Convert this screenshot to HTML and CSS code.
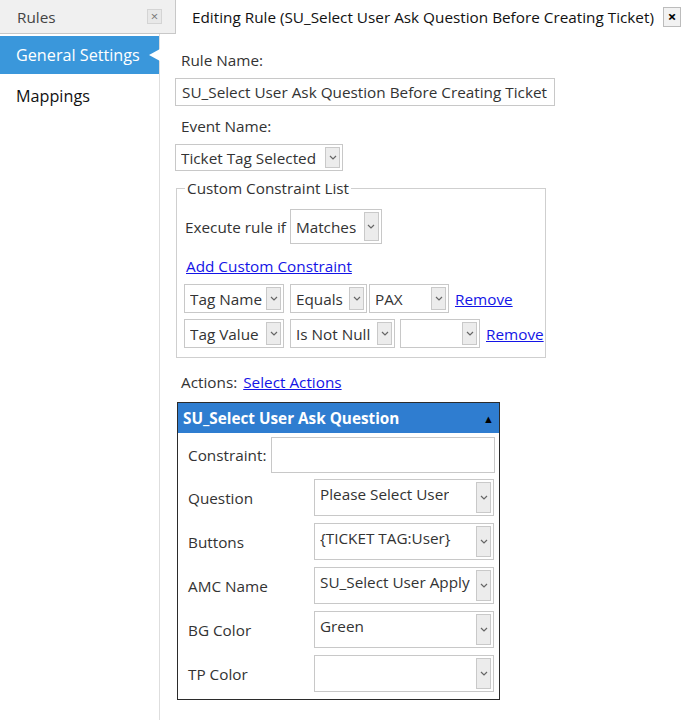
FILE: index.html
```html
<!DOCTYPE html>
<html lang="en">
<head>
    <meta charset="UTF-8">
    <title>Editing Rule</title>
    <link rel="stylesheet" href="styles.css">
</head>
<body>

<!-- Tab strip -->
<div class="tabbar">
    <div class="rules-tab">
        <span>Rules</span>
        <span class="tab-close">&times;</span>
    </div>
    <div class="edit-tab">
        <span>Editing Rule (SU_Select User Ask Question Before Creating Ticket)</span>
        <span class="edit-close">&times;</span>
    </div>
</div>

<div class="layout">
    <!-- Left navigation -->
    <nav class="sidebar">
        <div class="nav-item active">General Settings</div>
        <div class="nav-item">Mappings</div>
    </nav>

    <!-- Rule form -->
    <main class="content">
        <div class="label first">Rule Name:</div>
        <div class="textbox rule-name">SU_Select User Ask Question Before Creating Ticket</div>

        <div class="label">Event Name:</div>
        <div class="select event-select">
            <span class="select-text">Ticket Tag Selected</span>
            <span class="select-btn"><svg width="8" height="5" viewBox="0 0 8 5"><path d="M1 1l3 3 3-3" fill="none" stroke="#666" stroke-width="1.2"/></svg></span>
        </div>

        <fieldset class="constraints">
            <legend>Custom Constraint List</legend>

            <div class="execute-row">
                <span>Execute rule if</span>
                <div class="select matches-select">
                    <span class="select-text">Matches</span>
                    <span class="select-btn"><svg width="8" height="5" viewBox="0 0 8 5"><path d="M1 1l3 3 3-3" fill="none" stroke="#666" stroke-width="1.2"/></svg></span>
                </div>
            </div>

            <a href="#" class="link add-link">Add Custom Constraint</a>

            <div class="constraint-row">
                <div class="select small w-name">
                    <span class="select-text">Tag Name</span>
                    <span class="select-btn"><svg width="8" height="5" viewBox="0 0 8 5"><path d="M1 1l3 3 3-3" fill="none" stroke="#666" stroke-width="1.2"/></svg></span>
                </div>
                <div class="select small w-equals">
                    <span class="select-text">Equals</span>
                    <span class="select-btn"><svg width="8" height="5" viewBox="0 0 8 5"><path d="M1 1l3 3 3-3" fill="none" stroke="#666" stroke-width="1.2"/></svg></span>
                </div>
                <div class="select small w-value">
                    <span class="select-text">PAX</span>
                    <span class="select-btn"><svg width="8" height="5" viewBox="0 0 8 5"><path d="M1 1l3 3 3-3" fill="none" stroke="#666" stroke-width="1.2"/></svg></span>
                </div>
                <a href="#" class="link">Remove</a>
            </div>

            <div class="constraint-row">
                <div class="select small w-name">
                    <span class="select-text">Tag Value</span>
                    <span class="select-btn"><svg width="8" height="5" viewBox="0 0 8 5"><path d="M1 1l3 3 3-3" fill="none" stroke="#666" stroke-width="1.2"/></svg></span>
                </div>
                <div class="select small w-notnull">
                    <span class="select-text">Is Not Null</span>
                    <span class="select-btn"><svg width="8" height="5" viewBox="0 0 8 5"><path d="M1 1l3 3 3-3" fill="none" stroke="#666" stroke-width="1.2"/></svg></span>
                </div>
                <div class="select small w-value">
                    <span class="select-text"></span>
                    <span class="select-btn"><svg width="8" height="5" viewBox="0 0 8 5"><path d="M1 1l3 3 3-3" fill="none" stroke="#666" stroke-width="1.2"/></svg></span>
                </div>
                <a href="#" class="link">Remove</a>
            </div>
        </fieldset>

        <div class="actions-row">
            <span>Actions:</span>
            <a href="#" class="link">Select Actions</a>
        </div>

        <!-- Action panel -->
        <div class="action-panel">
            <div class="panel-header">
                <span>SU_Select User Ask Question</span>
                <span class="collapse">&#9650;</span>
            </div>
            <div class="panel-body">
                <div class="constraint-line">
                    <span>Constraint:</span>
                    <div class="textbox constraint-input"></div>
                </div>

                <div class="param-grid">
                    <span class="param-label">Question</span>
                    <div class="select param">
                        <span class="select-text">Please Select User</span>
                        <span class="select-btn"><svg width="8" height="5" viewBox="0 0 8 5"><path d="M1 1l3 3 3-3" fill="none" stroke="#666" stroke-width="1.2"/></svg></span>
                    </div>

                    <span class="param-label">Buttons</span>
                    <div class="select param">
                        <span class="select-text">{TICKET TAG:User}</span>
                        <span class="select-btn"><svg width="8" height="5" viewBox="0 0 8 5"><path d="M1 1l3 3 3-3" fill="none" stroke="#666" stroke-width="1.2"/></svg></span>
                    </div>

                    <span class="param-label">AMC Name</span>
                    <div class="select param">
                        <span class="select-text">SU_Select User Apply</span>
                        <span class="select-btn"><svg width="8" height="5" viewBox="0 0 8 5"><path d="M1 1l3 3 3-3" fill="none" stroke="#666" stroke-width="1.2"/></svg></span>
                    </div>

                    <span class="param-label">BG Color</span>
                    <div class="select param">
                        <span class="select-text">Green</span>
                        <span class="select-btn"><svg width="8" height="5" viewBox="0 0 8 5"><path d="M1 1l3 3 3-3" fill="none" stroke="#666" stroke-width="1.2"/></svg></span>
                    </div>

                    <span class="param-label">TP Color</span>
                    <div class="select param">
                        <span class="select-text"></span>
                        <span class="select-btn"><svg width="8" height="5" viewBox="0 0 8 5"><path d="M1 1l3 3 3-3" fill="none" stroke="#666" stroke-width="1.2"/></svg></span>
                    </div>
                </div>
            </div>
        </div>
    </main>
</div>

</body>
</html>
```

FILE: styles.css
```css
/* General page */
body {
    margin: 0;
    width: 690px;
    height: 720px;
    overflow: hidden;
    background: #fff;
    font-family: 'Open Sans', 'Noto Sans', sans-serif;
    font-size: 15.3px;
    color: #333;
}

/* Tab strip */
.tabbar {
    display: flex;
    height: 34px;
}

.rules-tab {
    width: 176px;
    box-sizing: border-box;
    background: #f0f0f0;
    border-right: 1px solid #c8c8c8;
    border-bottom: 1px solid #c8c8c8;
    display: flex;
    align-items: center;
    justify-content: space-between;
    padding: 0 13px 0 17px;
    color: #444;
}

.tab-close {
    width: 15px;
    height: 15px;
    box-sizing: border-box;
    border: 1px solid #d4d4d4;
    background: #e8e8e8;
    color: #777;
    font-size: 13px;
    line-height: 12px;
    text-align: center;
}

.edit-tab {
    flex: 1;
    display: flex;
    align-items: center;
    justify-content: space-between;
    padding: 0 9px 0 16px;
    color: #111;
}

.edit-close {
    width: 18px;
    height: 20px;
    box-sizing: border-box;
    border: 1px solid #bcbcbc;
    background: #f2f2f2;
    color: #000;
    font-weight: bold;
    font-size: 15px;
    line-height: 17px;
    text-align: center;
}

/* Main layout */
.layout {
    display: flex;
    height: 686px;
}

.sidebar {
    width: 160px;
    box-sizing: border-box;
    border-right: 1px solid #dedede;
    padding-top: 2px;
}

.nav-item {
    position: relative;
    height: 38px;
    line-height: 38px;
    padding-left: 16px;
    font-size: 16.2px;
    color: #111;
}

.nav-item.active {
    background: #3a97db;
    color: #fff;
}

/* Little notch pointing at the content */
.nav-item.active::after {
    content: '';
    position: absolute;
    right: -1px;
    top: 13px;
    border-top: 6px solid transparent;
    border-bottom: 6px solid transparent;
    border-right: 11px solid #fff;
}

.nav-item + .nav-item {
    height: 44px;
    line-height: 44px;
}

.content {
    flex: 1;
    padding-left: 15px;
}

.label {
    line-height: 22px;
    margin: 9px 0 7px 6px;
}

.label.first {
    margin-top: 15px;
}

.textbox {
    box-sizing: border-box;
    border: 1px solid #c8c8c8;
    background: #fff;
}

.rule-name {
    width: 380px;
    height: 28px;
    line-height: 26px;
    padding-left: 6px;
    white-space: nowrap;
    overflow: hidden;
}

/* Fake dropdowns */
.select {
    box-sizing: border-box;
    border: 1px solid #c8c8c8;
    background: #fff;
    display: flex;
    align-items: center;
    justify-content: space-between;
    padding: 2px 2px 2px 5px;
}

.select-text {
    white-space: nowrap;
    overflow: hidden;
}

.select-btn {
    align-self: stretch;
    width: 15px;
    box-sizing: border-box;
    border: 1px solid #c9c9c9;
    background: #ececec;
    display: flex;
    align-items: center;
    justify-content: center;
    flex-shrink: 0;
}

.event-select {
    width: 168px;
    height: 27px;
}

/* Custom constraint list */
.constraints {
    width: 370px;
    min-width: 0;
    box-sizing: border-box;
    margin: 6px 0 0 1px;
    padding: 0 0 9px 7px;
    border: 1px solid #cfcfcf;
}

.constraints legend {
    padding: 0 2px;
    margin-left: 1px;
    line-height: 22px;
}

.execute-row {
    display: flex;
    align-items: center;
    gap: 4px;
    margin-top: 10px;
    padding-left: 1px;
}

.matches-select {
    width: 92px;
    height: 35px;
}

.link {
    color: #1414e6;
    text-decoration: underline;
}

.add-link {
    display: block;
    line-height: 22px;
    margin: 11px 0 7px 2px;
}

.constraint-row {
    display: flex;
    align-items: center;
    margin-bottom: 6px;
    white-space: nowrap;
}

.constraint-row:last-child {
    margin-bottom: 0;
}

.constraint-row > * {
    flex-shrink: 0;
}

.select.small {
    height: 29px;
    margin-right: 5px;
}

.w-name { width: 100px; margin-right: 6px !important; }
.w-equals { width: 77px; margin-right: 2px !important; }
.w-notnull { width: 105px; margin-right: 5px !important; }
.w-value { width: 80px; }

.constraint-row .w-value { margin-right: 6px; }

/* Actions */
.actions-row {
    display: flex;
    gap: 6px;
    line-height: 22px;
    margin: 13px 0 9px 6px;
}

.action-panel {
    width: 323px;
    box-sizing: border-box;
    margin-left: 2px;
    border: 1px solid #2b2b2b;
}

.panel-header {
    background: #2f7dd0;
    color: #fff;
    font-weight: bold;
    height: 30px;
    display: flex;
    align-items: center;
    justify-content: space-between;
    padding: 0 5px 0 5px;
}

.collapse {
    color: #000;
    font-size: 11px;
}

.panel-body {
    padding: 4px 4px 7px 10px;
}

.constraint-line {
    display: flex;
    align-items: center;
    gap: 3px;
}

.constraint-input {
    width: 224px;
    height: 36px;
    margin-left: auto;
}

.param-grid {
    display: grid;
    grid-template-columns: 126px 180px;
    row-gap: 7px;
    align-items: center;
    margin-top: 6px;
}

.select.param {
    height: 37px;
    align-items: flex-start;
    padding: 2px 2px 2px 5px;
}

.select.param .select-text {
    line-height: 24px;
}
```
